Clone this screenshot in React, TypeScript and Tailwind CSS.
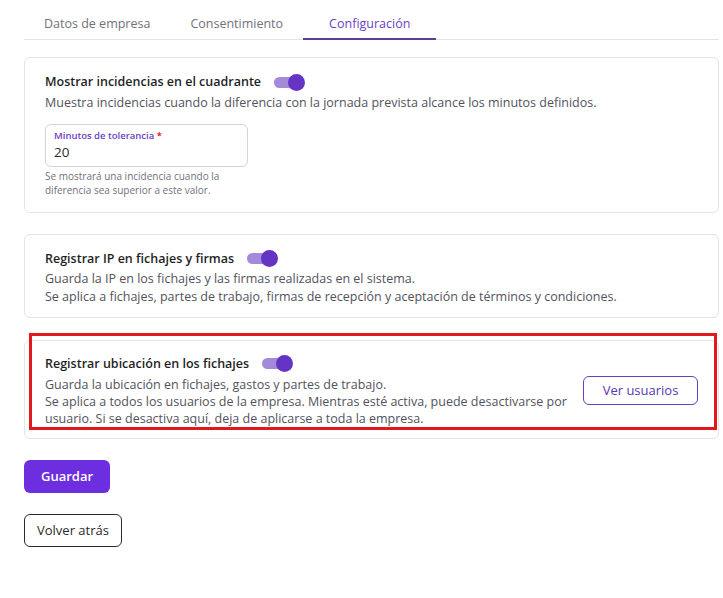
import { useState } from "react";

function Toggle({ on = true }: { on?: boolean }) {
  return (
    <span className="relative inline-flex items-center w-[31px] h-[18px] shrink-0">
      <span className={`absolute left-0 w-[24px] h-[11px] rounded-full ${on ? "bg-[#a58ad9]" : "bg-zinc-300"}`} />
      <span className={`absolute ${on ? "left-[14px] bg-[#6434c4]" : "left-0 bg-white"} w-[17px] h-[17px] rounded-full`} />
    </span>
  );
}

const tabs = ["Datos de empresa", "Consentimiento", "Configuración"];

export default function App() {
  const [tab, setTab] = useState(2);
  const [minutes, setMinutes] = useState("20");

  return (
    <div className="min-h-screen bg-white text-[#2b2b2b] font-['Open_Sans',sans-serif] pl-6 pr-1">
      {/* Tabs */}
      <div className="flex border-b border-zinc-200 h-[40px]">
        {tabs.map((t, i) => (
          <button
            key={t}
            onClick={() => setTab(i)}
            className={`pt-[10px] text-[12.5px] h-[40px] -mb-px border-b-2 ${
              i === tab ? "text-[#6a3fc3] border-[#5a3e9c] px-[26px]" : "text-zinc-500 border-transparent px-5"
            }`}
          >
            {t}
          </button>
        ))}
      </div>

      {/* Card 1 */}
      <div className="mt-[17px] border border-zinc-200 rounded-md px-5 pt-[15px] pb-[15px]">
        <div className="flex items-center gap-[13px]">
          <span className="text-[12.5px] leading-[18px] font-semibold text-[#1f1f1f]">Mostrar incidencias en el cuadrante</span>
          <Toggle />
        </div>
        <p className="text-[12.5px] text-zinc-600 mt-[3px]">
          Muestra incidencias cuando la diferencia con la jornada prevista alcance los minutos definidos.
        </p>
        <div className="mt-[11px] w-[203px] h-[43px] border border-zinc-300 rounded-md px-[8px] pt-[5px]">
          <div className="text-[9.5px] font-semibold text-[#6a3fc3] leading-[12px]">
            Minutos de tolerancia <span className="text-red-600">*</span>
          </div>
          <input
            value={minutes}
            onChange={(e) => setMinutes(e.target.value)}
            className="block w-full text-[13.5px] text-[#2b2b2b] leading-[20px] outline-none"
          />
        </div>
        <p className="text-[10px] text-zinc-500 mt-[2px] leading-[14px] w-[210px]">
          Se mostrará una incidencia cuando la diferencia sea superior a este valor.
        </p>
      </div>

      {/* Card 2 */}
      <div className="mt-[21px] border border-zinc-200 rounded-md px-5 pt-[15px] pb-[11px]">
        <div className="flex items-center gap-[13px]">
          <span className="text-[12.5px] leading-[18px] font-semibold text-[#1f1f1f]">Registrar IP en fichajes y firmas</span>
          <Toggle />
        </div>
        <p className="text-[12.5px] text-zinc-600 mt-[2px] leading-[18px]">
          Guarda la IP en los fichajes y las firmas realizadas en el sistema.
          <br />
          Se aplica a fichajes, partes de trabajo, firmas de recepción y aceptación de términos y condiciones.
        </p>
      </div>

      {/* Card 3 */}
      <div className="relative mt-[22px] border border-zinc-200 rounded-md pl-5 pr-5 pt-[14px] pb-[11px] flex items-center justify-between">
        <div>
          <div className="flex items-center gap-[13px]">
            <span className="text-[12.5px] leading-[18px] font-semibold text-[#1f1f1f]">Registrar ubicación en los fichajes</span>
            <Toggle />
          </div>
          <p className="text-[12.5px] text-zinc-600 mt-[3px] leading-[17px] w-[530px]">
            Guarda la ubicación en fichajes, gastos y partes de trabajo.
            <br />
            Se aplica a todos los usuarios de la empresa. Mientras esté activa, puede desactivarse por usuario. Si se
            desactiva aquí, deja de aplicarse a toda la empresa.
          </p>
        </div>
        <button className="w-[115px] h-[29px] border border-[#6a3fc3] rounded-md text-[13px] text-[#5a35b0]">
          Ver usuarios
        </button>
        {/* annotation */}
        <div className="absolute left-[4px] right-[1px] -top-[8px] bottom-[8px] border-[3px] border-[#e0191c] pointer-events-none" />
      </div>

      <div className="mt-[21px] flex flex-col items-start gap-[21px]">
        <button className="h-[33px] px-[17px] rounded-md bg-[#6d2ee0] text-white text-[13px] font-semibold">
          Guardar
        </button>
        <button className="h-[33px] px-[12px] rounded-md border border-[#2b2b2b] text-[13px] text-[#2b2b2b]">
          Volver atrás
        </button>
      </div>
    </div>
  );
}
